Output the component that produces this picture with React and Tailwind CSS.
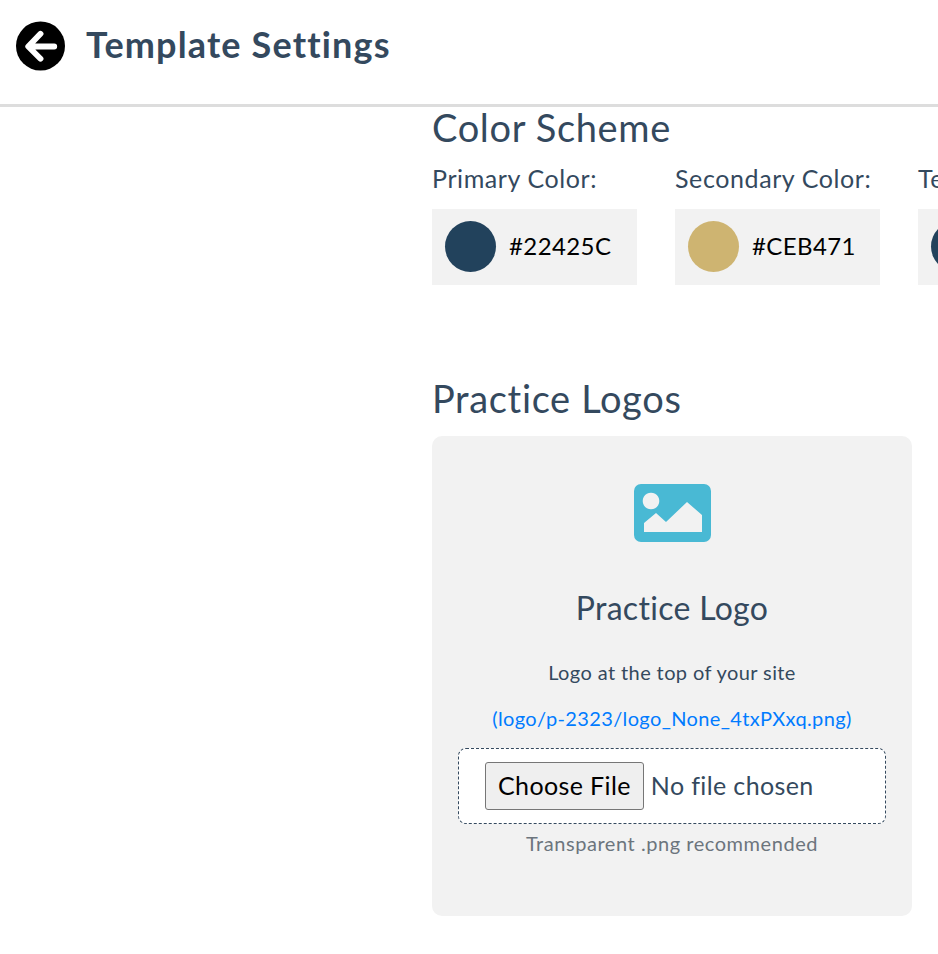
const F = { fontFamily: '"Lato", "Noto Sans", sans-serif' };

function Swatch({ label, color, hex }) {
  return (
    <div className="w-[205px] shrink-0">
      <div className="text-[25px] leading-[34px] tracking-[0.6px] text-[#34495e] whitespace-nowrap">{label}</div>
      <div className="mt-[14px] h-[76px] bg-[#f2f2f2] flex items-center pl-[13px] pb-[2px]">
        <div className="w-[51px] h-[51px] rounded-full shrink-0" style={{ backgroundColor: color }} />
        <div className="ml-[13px] text-[24px] tracking-[0.4px] text-black whitespace-nowrap">{hex}</div>
      </div>
    </div>
  );
}

export default function App() {
  return (
    <div className="w-[938px] h-[954px] overflow-hidden bg-white" style={F}>
      <header className="h-[107px] border-b-[3px] border-[#dddddd] flex items-center pl-[16px] pb-[13px]">
        <svg width="49" height="50" viewBox="0 0 50 50" className="shrink-0">
          <circle cx="25" cy="25" r="25" fill="#000" />
          <path d="M39 25.5H13M25 12.5 12.5 25.5 25 38" fill="none" stroke="#fff" strokeWidth="6" strokeLinecap="round" strokeLinejoin="round" />
        </svg>
        <h1 className="ml-[21px] -mt-[4px] text-[36px] tracking-[1.15px] font-bold text-[#34495e] whitespace-nowrap">Template Settings</h1>
      </header>
      <main className="pl-[432px]">
        <h2 className="text-[38px] leading-[40px] tracking-[0.65px] text-[#34495e] whitespace-nowrap">Color Scheme</h2>
        <div className="flex gap-[38px] mt-[14px]">
          <Swatch label="Primary Color:" color="#22425C" hex="#22425C" />
          <Swatch label="Secondary Color:" color="#CEB471" hex="#CEB471" />
          <Swatch label="Text Color:" color="#22425C" hex="#22425C" />
        </div>
        <h2 className="mt-[91px] text-[38px] leading-[44px] tracking-[0.65px] text-[#34495e] whitespace-nowrap">Practice Logos</h2>
        <section className="mt-[16px] w-[480px] h-[480px] bg-[#f2f2f2] rounded-[10px] flex flex-col items-center pt-[48px]">
          <svg width="77" height="58" viewBox="0 0 77 58">
            <path fillRule="evenodd" fill="#49b9d4" d="M7 0H70a7 7 0 0 1 7 7V51a7 7 0 0 1-7 7H7a7 7 0 0 1-7-7V7a7 7 0 0 1 7-7ZM17 8.7a8.3 8.3 0 1 0 .01 0ZM10 48H68V31L53 18 32 38 22 29 10 39Z" />
          </svg>
          <div className="mt-[47px] text-[32px] leading-[38px] tracking-[0.3px] text-[#34495e]">Practice Logo</div>
          <div className="mt-[30px] text-[20px] leading-[30px] tracking-[0.4px] text-[#34495e]">Logo at the top of your site</div>
          <a className="mt-[16px] text-[20px] leading-[30px] tracking-[0.37px] text-[#007bff]">(logo/p-2323/logo_None_4txPXxq.png)</a>
          <div className="mt-[15px] w-[428px] h-[76px] bg-white border border-dashed border-[#34495e] rounded-[8px] flex items-center pl-[26px] pb-[1px]">
            <input type="file" className="text-[25px] tracking-[0.38px] text-[#34495e] w-[390px] file:text-black file:bg-[#efefef] file:border file:border-solid file:border-[#767676] file:rounded-[3px] file:px-[12px] file:h-[48px] file:mr-[7px]" />
          </div>
          <div className="mt-[4px] text-[20px] leading-[30px] tracking-[0.55px] text-[#6c757d]">Transparent .png recommended</div>
        </section>
      </main>
    </div>
  );
}
